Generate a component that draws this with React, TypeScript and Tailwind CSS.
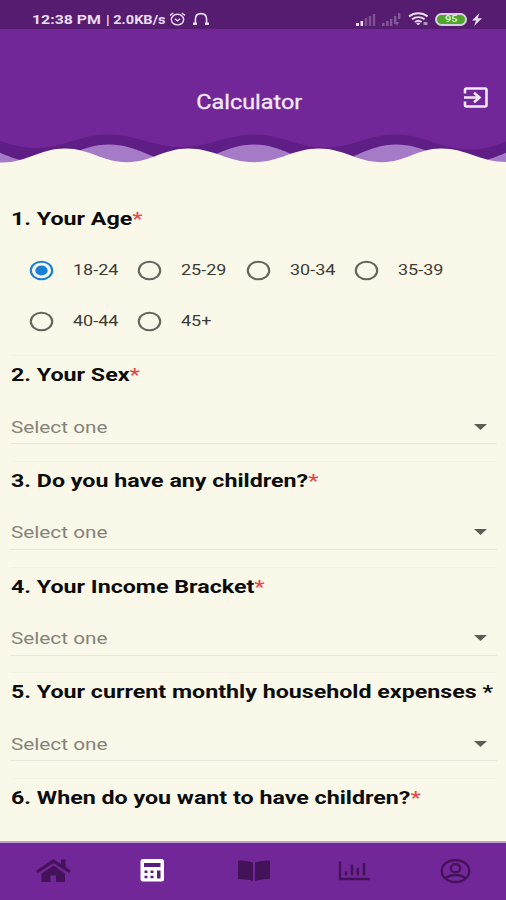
import React, { useState } from 'react';

const ages = ['18-24', '25-29', '30-34', '35-39', '40-44', '45+'];

const questions = [
  { id: 2, text: 'Your Sex', star: 'red' },
  { id: 3, text: 'Do you have any children?', star: 'red' },
  { id: 4, text: 'Your Income Bracket', star: 'red' },
  { id: 5, text: 'Your current monthly household expenses ', star: 'black' },
  { id: 6, text: 'When do you want to have children?', star: 'red' },
];

// Smooth line through alternating crests and troughs, filled down to the bottom of the svg
const wave = (points: number[][]) => {
  let d = `M${points[0][0]} ${points[0][1]}`;
  for (let i = 1; i < points.length; i++) {
    const [x0, y0] = points[i - 1];
    const [x1, y1] = points[i];
    const k = (x1 - x0) * 0.4;
    d += ` C${x0 + k} ${y0} ${x1 - k} ${y1} ${x1} ${y1}`;
  }
  return d + ' V40 H-40 Z';
};

const darkWave = wave([[-34, 1.5], [36, 15], [108, 1.5], [182, 14], [254, 1.5], [325, 14.5], [396, 1.5], [470, 16.5], [540, 1.5]]);
const lightWave = wave([[-34, 11.5], [36, 29], [109, 11.5], [182, 29], [254, 11.5], [325, 29], [396, 11.5], [470, 29], [540, 11.5]]);
const frontWave = wave([[-60, 15.5], [2, 29.5], [65, 15.5], [127, 29.2], [188, 15.5], [254, 29.2], [319, 15.5], [382, 29.2], [441, 15.5], [506, 29]]);

const StatusBar = () => (
  <div className="h-[29px] bg-[#561c70] flex items-center justify-between pl-[32px] pr-[24px] pt-[9px] text-[#eadcf2]">
    <div className="flex items-center">
      <div className="w-[74px] whitespace-nowrap">
        <span className="inline-block origin-left scale-x-[1.32] text-[12px] leading-[16px] font-bold">12:38 PM</span>
      </div>
      <div className="w-[60px] whitespace-nowrap">
        <span className="inline-block origin-left scale-x-[1.21] text-[12px] leading-[16px] font-bold">| 2.0KB/s</span>
      </div>
      <svg className="ml-[3px]" width="17" height="14" viewBox="0 0 17 14" fill="none" stroke="currentColor" strokeWidth="1.4">
        <ellipse cx="8.5" cy="7.6" rx="6.2" ry="5.3" />
        <path d="M1 3.4 4.3 1M16 3.4 12.7 1M5.8 6.8l2.7 2 2.7-2" />
      </svg>
      <svg className="ml-[6px]" width="18" height="14" viewBox="0 0 18 14" fill="none" stroke="currentColor" strokeWidth="1.6">
        <path d="M3.4 12V7.2C3.4 3.6 5.6 1.6 9 1.6s5.6 2 5.6 5.6V12" />
        <path d="M1 11.8h4M13 11.8h4" strokeWidth="2.6" />
      </svg>
    </div>
    <div className="flex items-center">
      <svg width="20" height="13" viewBox="0 0 20 13" fill="currentColor">
        <path d="M0 10h3v3H0zM4.500 8h2.600v5H4.500z" />
        <path d="M8.800 5h2.400v8H8.800zM12.800 3h2.400v10h-2.400zM16.800 1h2.400v12h-2.400z" opacity=".28" />
      </svg>
      <svg className="ml-[6px]" width="19" height="13" viewBox="0 0 19 13" fill="currentColor" opacity=".3">
        <path d="M0 10h2.600v3H0zM4 8h2.600v5H4zM8 6h2.400v7H8zM12 3h2.400v8H12zM16 0h2.400v6H16zM13 9h4l-2 4z" />
      </svg>
      <svg className="ml-[7px]" width="21" height="14" viewBox="0 0 21 14" fill="none" stroke="currentColor" strokeWidth="2">
        <path d="M1 4.400C6.400.2 14.200.2 19.600 4.400M4 7.300c3.800-2.900 8.800-2.900 12.600 0M7 10c2-1.600 4.600-1.600 6.600 0" />
        <path d="M8.800 11.300h3l-1.500 1.700z" fill="currentColor" strokeWidth="1" />
        <path d="M15.500 11.500h4" strokeWidth="3" opacity=".6" />
      </svg>
      <div className="ml-[6px] w-[32px] h-[13px] rounded-full border-2 border-[#d9cfe0] bg-[#4fa62c] flex items-center justify-center">
        <span className="text-[9px] leading-[9px] font-bold scale-x-[1.2] text-[#d5efc5]">95</span>
      </div>
      <svg className="ml-[5px]" width="10" height="13" viewBox="0 0 10 13" fill="currentColor">
        <path d="M7.500 0 0 7.400h4L2.200 13 10 5.200H5.800z" />
      </svg>
    </div>
  </div>
);

const Header = () => (
  <header className="bg-[#722799]">
    <div className="h-[104px] pt-[58px] flex justify-between items-start px-[18px]">
      <div className="w-[18px]" />
      <h1 className="mt-[3px] text-[20px] leading-[24px] text-[#f3e9f8] [-webkit-text-stroke:0.3px_#f3e9f8] scale-x-[1.17]">Calculator</h1>
      <svg width="25" height="21" viewBox="0 0 25 21" fill="none" stroke="#f3e9f8" strokeWidth="2.600">
        <path d="M2 6.500V3c0-.8.500-1.500 1.500-1.500h18.500c1 0 1.500.7 1.500 1.500v15c0 .8-.5 1.500-1.500 1.500H3.500c-1 0-1.500-.7-1.500-1.500v-3.500" />
        <path d="M1 10.500h14.500M11 5.800l5.500 4.700-5.500 4.700" />
      </svg>
    </div>
    <svg className="block" width="506" height="40" viewBox="0 0 506 40">
      <path d={darkWave} fill="#5f1e85" />
      <path d={lightWave} fill="#a57bc8" />
      <path d={frontWave} fill="#faf8e8" />
    </svg>
  </header>
);

const Radio = ({ checked }: { checked: boolean }) => (
  <svg className="block" width="25" height="21" viewBox="0 0 25 21" fill="none">
    <ellipse cx="12.500" cy="10.500" rx="10.700" ry="8.800" stroke={checked ? '#1c7fd6' : '#66645c'} strokeWidth="2.100" />
    {checked && <ellipse cx="12.500" cy="10.500" rx="6.200" ry="5.100" fill="#1c7fd6" />}
  </svg>
);

const Title = ({ id, text, star }: { id: number; text: string; star: string }) => (
  <h2 className="origin-left scale-x-[1.255] w-max whitespace-pre text-[18.500px] leading-[24px] font-bold text-[#0c0c0c]">
    {id}. {text}
    <span className={star === 'red' ? 'text-[#e5484a] font-medium' : ''}>*</span>
  </h2>
);

const SelectBox = () => (
  <div className="mt-[23px] ml-[-1px] mr-[-2px] h-[34px] pl-[1px] pr-[10px] border-b border-[#e9e7dc] flex justify-between items-center">
    <span className="origin-left scale-x-[1.22] text-[17px] leading-[24px] text-[#85837a]">Select one</span>
    <svg width="13" height="6" viewBox="0 0 13 6" fill="#5d5b54">
      <path d="M0 0h13L6.500 6z" />
    </svg>
  </div>
);

const NavBar = () => (
  <nav className="h-[59px] shrink-0 border-t-2 border-[#bda0cc] bg-[#722799] flex justify-between pl-[36px] pr-[35px] pt-[16px] text-[#431259]">
    <svg width="35" height="24" viewBox="0 0 35 24" fill="currentColor">
      <path d="M17.500 0 0 11.800l2 2.300L17.500 4 33 14.100l2-2.300-5.500-3.800V.500H25v4.800z" />
      <path d="M17.500 6.500 5.500 14.500V23h9V16.500h5.500V23h9v-8.500z" />
    </svg>
    <svg width="25" height="24" viewBox="0 0 25 24">
      <rect x=".500" width="23.500" height="22.500" rx="2.500" fill="#fff" />
      <path d="M4 4h16.500v4H4zM4.500 11.500h3v2.500h-3zM10.500 11.500h3v2.500h-3zM4.500 16.800h3v2.500h-3zM10.500 16.800h3v2.500h-3zM17 11.500h3.500v8H17z" fill="#58207c" />
    </svg>
    <svg className="ml-[2px]" width="34" height="24" viewBox="0 0 34 24" fill="currentColor">
      <path d="M1 1.500c5 0 10 .500 15 2V22c-5-1.500-10-2-15-2zM33 1.500c-5 0-10 .500-15 2V22c5-1.500 10-2 15-2z" />
    </svg>
    <svg className="ml-[-2px]" width="33" height="24" viewBox="0 0 33 24" fill="none" stroke="currentColor" strokeWidth="2.300">
      <path d="M2 2.500v17.500h30" />
      <path d="M8 16.500v-4M14 16.500v-11M19.800 16.500V9M26 16.500V4" strokeWidth="2.600" />
    </svg>
    <svg width="31" height="25" viewBox="0 0 31 25" fill="none" stroke="currentColor" strokeWidth="2.300">
      <ellipse cx="15.500" cy="12" rx="13.800" ry="11" />
      <ellipse cx="15.500" cy="9.200" rx="4.800" ry="4" />
      <path d="M5.500 19.500c2.500-2.500 6-3.500 10-3.500s7.500 1 10 3.500" />
    </svg>
  </nav>
);

const App = () => {
  const [age, setAge] = useState('18-24');

  return (
    <div className="w-[506px] h-[900px] flex flex-col overflow-hidden bg-[#faf8e8] font-[Roboto,sans-serif]">
      <StatusBar />
      <Header />

      <main className="h-[668px] overflow-hidden pl-[11px] pr-[11px] pt-[34px]">
        <Title id={1} text="Your Age" star="red" />
        <div className="mt-[14px] ml-[18px] grid grid-cols-[repeat(4,108.300px)]">
          {ages.map((a) => (
            <label key={a} className="h-[51px] flex items-center" onClick={() => setAge(a)}>
              <Radio checked={a === age} />
              <span className="relative top-[-1px] ml-[19px] origin-left scale-x-[1.2] text-[15px] leading-[20px] text-[#3c3b36]">{a}</span>
            </label>
          ))}
        </div>
        <div className="mt-[8px]">
          {questions.map((q) => (
            <section key={q.id} className="h-[105.750px] border-t border-[#f3f1e3] pt-[7px]">
              <Title id={q.id} text={q.text} star={q.star} />
              {q.id < 6 && <SelectBox />}
            </section>
          ))}
        </div>
      </main>

      <NavBar />
    </div>
  );
};

export default App;
